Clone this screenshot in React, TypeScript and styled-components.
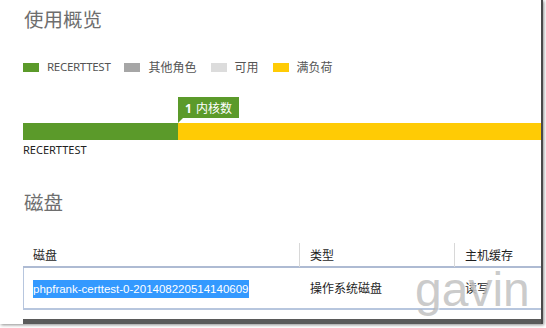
import React from 'react';
import styled, { createGlobalStyle } from 'styled-components';

const GlobalStyle = createGlobalStyle`
  html, body {
    margin: 0;
    padding: 0;
    background: #ffffff;
  }
  body {
    width: 546px;
    height: 328px;
    overflow: hidden;
    font-family: "Noto Sans", "Noto Sans CJK SC", sans-serif;
  }
`;

const CJK = `"Noto Sans CJK SC", "Noto Sans", sans-serif`;
const GREEN = '#5b9a2a';
const YELLOW = '#ffcb05';

const Frame = styled.div`
  position: relative;
  box-sizing: border-box;
  width: 543px;
  height: 324px;
  border-right: 2px solid #4a4a4a;
  box-shadow: 1px 1px 3px rgba(0, 0, 0, 0.45);
  background: #fff;
  display: flex;
  flex-direction: column;
  padding-left: 23px;
  overflow: hidden;
`;

const Heading = styled.h1<{ top: number }>`
  margin: ${p => p.top}px 0 0 1px;
  font-family: ${CJK};
  font-weight: 400;
  font-size: 19.5px;
  line-height: 28px;
  height: 28px;
  color: #6e6e6e;
`;

const Legend = styled.div`
  display: flex;
  align-items: center;
  margin-top: 27px;
  height: 14px;
`;

const LegendItem = styled.div`
  display: flex;
  align-items: center;
  gap: 8px;
  margin-right: 14px;
  font-size: 12px;
  color: #555;
`;

const Swatch = styled.span<{ color: string }>`
  display: block;
  width: 16px;
  height: 9px;
  background: ${p => p.color};
`;

const LegendText = styled.span<{ latin?: boolean }>`
  font-family: ${p => (p.latin ? `"Noto Sans", sans-serif` : CJK)};
  font-size: ${p => (p.latin ? '11.5px' : '12px')};
  letter-spacing: ${p => (p.latin ? '-0.3px' : '0')};
  line-height: 14px;
`;

const Chart = styled.div`
  margin-top: 23px;
  display: flex;
  flex-direction: column;
`;

const Callout = styled.div`
  position: relative;
  align-self: flex-start;
  height: 21px;
  padding: 0 7px 0 7px;
  background: ${GREEN};
  color: #fff;
  font-family: ${CJK};
  font-size: 12px;
  line-height: 21px;
  margin-bottom: 5px;

  b {
    font-family: "Noto Sans", sans-serif;
    font-weight: 700;
    margin-right: 4px;
  }

  &::after {
    content: '';
    position: absolute;
    left: 0;
    top: 21px;
    width: 0;
    height: 0;
    border-top: 5px solid ${GREEN};
    border-right: 5px solid transparent;
  }
`;

const Bar = styled.div`
  display: flex;
  height: 17px;
`;

const Segment = styled.div<{ color: string }>`
  background: ${p => p.color};
`;

const BarLabel = styled.div`
  margin-top: 3px;
  font-family: "Noto Sans", sans-serif;
  font-size: 11px;
  line-height: 14px;
  color: #222;
`;

const Table = styled.div`
  margin-top: 27px;
  display: flex;
  flex-direction: column;
`;

const HeaderRow = styled.div`
  display: grid;
  grid-template-columns: 276px 155px 1fr;
  height: 23px;
  border-bottom: 2px solid #aebbd3;
`;

const HeaderCell = styled.div<{ divider?: boolean }>`
  padding-left: 10px;
  border-left: ${p => (p.divider ? '1px solid #d8d8d8' : 'none')};
  font-family: ${CJK};
  font-size: 12px;
  line-height: 24px;
  color: #1e1e1e;
`;

const DataRow = styled.div`
  display: grid;
  grid-template-columns: 276px 155px 1fr;
  align-items: center;
  height: 40px;
  border-left: 1px solid #b7c6de;
  border-bottom: 2px solid #b7c6de;
`;

const DataCell = styled.div`
  padding-left: 10px;
  font-family: ${CJK};
  font-size: 12px;
  line-height: 18px;
  color: #1e1e1e;
  white-space: nowrap;
  &:first-child {
    padding-left: 9px;
  }
`;

const Selected = styled.span`
  display: inline-block;
  background: #3399ff;
  color: #fff;
  font-family: "Liberation Sans", Arial, sans-serif;
  font-size: 11.5px;
  line-height: 18px;
  padding-right: 1px;
`;

const BottomBand = styled.div`
  margin-top: auto;
  height: 5px;
  background: #5a5a5a;
`;

const Watermark = styled.div`
  position: absolute;
  left: 415px;
  top: 266px;
  font-family: "Liberation Sans", Arial, sans-serif;
  font-size: 48px;
  line-height: 48px;
  color: rgba(180, 180, 180, 0.7);
  text-shadow: 1px 1px 1px rgba(255, 255, 255, 0.6);
  pointer-events: none;
`;

const legend = [
  { color: GREEN, label: 'RECERTTEST', latin: true },
  { color: '#a6a6a6', label: '其他角色' },
  { color: '#dcdcdc', label: '可用' },
  { color: YELLOW, label: '满负荷' },
];

export default function App(): React.ReactElement {
  const used = 155;
  return (
    <>
      <GlobalStyle />
      <Frame>
        <Heading top={5}>使用概览</Heading>
        <Legend>
          {legend.map(item => (
            <LegendItem key={item.label}>
              <Swatch color={item.color} />
              <LegendText latin={item.latin}>{item.label}</LegendText>
            </LegendItem>
          ))}
        </Legend>
        <Chart>
          <Callout style={{ marginLeft: used }}>
            <b>1</b>内核数
          </Callout>
          <Bar>
            <Segment color={GREEN} style={{ width: used }} />
            <Segment color={YELLOW} style={{ flex: 1 }} />
          </Bar>
        </Chart>
        <BarLabel>RECERTTEST</BarLabel>
        <Heading top={31}>磁盘</Heading>
        <Table>
          <HeaderRow>
            <HeaderCell>磁盘</HeaderCell>
            <HeaderCell divider>类型</HeaderCell>
            <HeaderCell divider>主机缓存</HeaderCell>
          </HeaderRow>
          <DataRow>
            <DataCell>
              <Selected>phpfrank-certtest-0-201408220514140609</Selected>
            </DataCell>
            <DataCell>操作系统磁盘</DataCell>
            <DataCell>读写</DataCell>
          </DataRow>
        </Table>
        <BottomBand />
        <Watermark>gavin</Watermark>
      </Frame>
    </>
  );
}
